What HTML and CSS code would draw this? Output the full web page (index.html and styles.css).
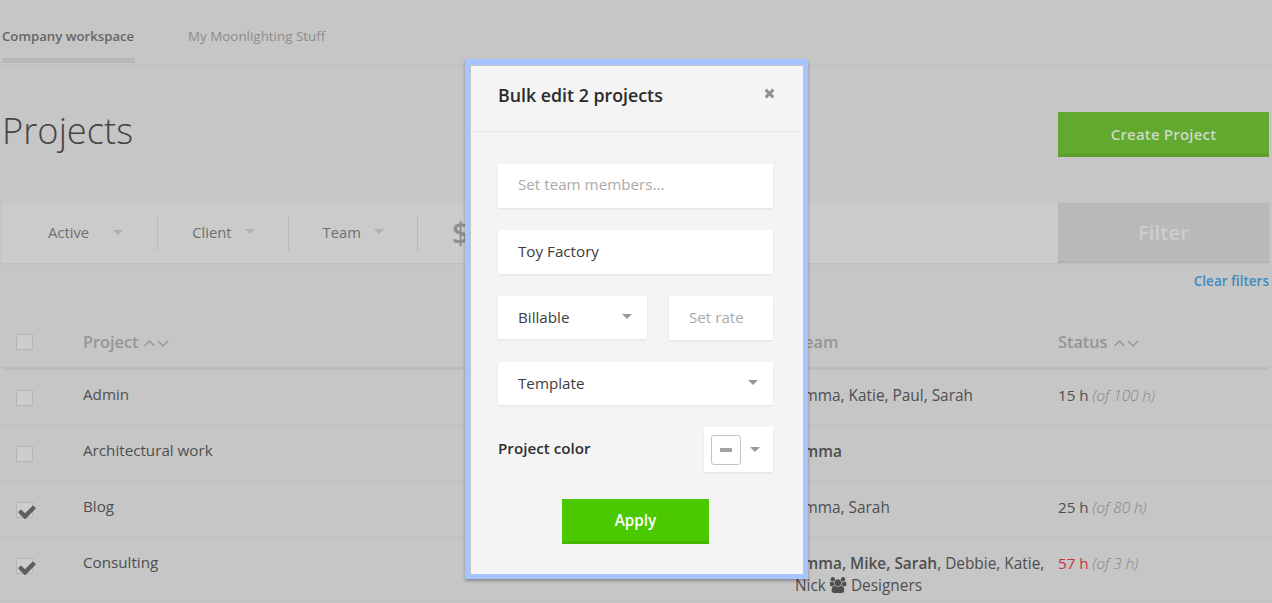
FILE: index.html
```html
<!DOCTYPE html>
<html lang="en">
<head>
<meta charset="utf-8">
<title>Projects</title>
<link rel="stylesheet" href="styles.css">
</head>
<body>
<div class="page">
  <nav class="tabs">
    <a class="tab tab-active">Company workspace</a>
    <a class="tab">My Moonlighting Stuff</a>
  </nav>
  <header class="title-row">
    <h1 class="title">Projects</h1>
    <button class="create">Create Project</button>
  </header>
  <section class="filters">
    <div class="filter filter-first"><span>Active</span><i class="caret caret-filter"></i></div>
    <div class="filter"><span>Client</span><i class="caret caret-filter"></i></div>
    <div class="filter"><span>Team</span><i class="caret caret-filter"></i></div>
    <div class="filter filter-money"><span>$</span></div>
    <button class="filter-btn">Filter</button>
  </section>
  <div class="clear-row"><a class="clear">Clear filters</a></div>
  <div class="table">
    <div class="row row-head">
      <div><span class="check"></span></div>
      <div class="sort">Project <svg class="chev" viewBox="0 0 25 8"><path d="M.5 7l5-5 5 5M14 2l5 5 5-5" fill="none" stroke="currentColor" stroke-width="1.4"/></svg></div>
      <div>Team</div>
      <div class="sort">Status <svg class="chev" viewBox="0 0 25 8"><path d="M.5 7l5-5 5 5M14 2l5 5 5-5" fill="none" stroke="currentColor" stroke-width="1.4"/></svg></div>
    </div>
    <div class="row">
      <div><span class="check"></span></div>
      <div>Admin</div>
      <div class="team">Emma, Katie, Paul, Sarah</div>
      <div class="status">15 h <em>(of 100 h)</em></div>
    </div>
    <div class="row">
      <div><span class="check"></span></div>
      <div>Architectural work</div>
      <div class="team"><b>Emma</b></div>
      <div class="status"></div>
    </div>
    <div class="row">
      <div><span class="check"><svg class="tick" viewBox="0 0 1792 1792"><path d="M1671 566q0 40-28 68l-724 724-136 136q-28 28-68 28t-68-28l-136-136-362-362q-28-28-28-68t28-68l136-136q28-28 68-28t68 28l294 295 656-657q28-28 68-28t68 28l136 136q28 28 28 68z"/></svg></span></div>
      <div>Blog</div>
      <div class="team">Emma, Sarah</div>
      <div class="status">25 h <em>(of 80 h)</em></div>
    </div>
    <div class="row row-tall">
      <div><span class="check"><svg class="tick" viewBox="0 0 1792 1792"><path d="M1671 566q0 40-28 68l-724 724-136 136q-28 28-68 28t-68-28l-136-136-362-362q-28-28-28-68t28-68l136-136q28-28 68-28t68 28l294 295 656-657q28-28 68-28t68 28l136 136q28 28 28 68z"/></svg></span></div>
      <div>Consulting</div>
      <div class="team"><b>Emma, Mike, Sarah</b>, Debbie, Katie, Nick <svg class="users" viewBox="0 0 1920 1792"><path d="M529 896q-162 5-265 128h-134q-82 0-138-40.500t-56-118.500q0-353 124-353 6 0 43.500 21t97.500 42.500 119 21.500q67 0 133-23-5 37-5 66 0 139 81 256zm1071 637q0 120-73 189.500t-194 69.500h-874q-121 0-194-69.500t-73-189.500q0-53 3.500-103.500t14-109 26.500-108.500 43-97.500 62-81 85.500-53.500 111.500-20q10 0 43 21.500t73 48 107 48 135 21.500 135-21.500 107-48 73-48 43-21.500q61 0 111.500 20t85.500 53.500 62 81 43 97.500 26.500 108.500 14 109 3.500 103.500zm-1024-1277q0 106-75 181t-181 75-181-75-75-181 75-181 181-75 181 75 75 181zm704 384q0 159-112.500 271.500t-271.500 112.500-271.500-112.500-112.500-271.500 112.500-271.500 271.500-112.500 271.500 112.500 112.500 271.500zm576 225q0 78-56 118.500t-138 40.500h-134q-103-123-265-128 81-117 81-256 0-29-5-66 66 23 133 23 59 0 119-21.500t97.500-42.500 43.500-21q124 0 124 353zm-128-609q0 106-75 181t-181 75-181-75-75-181 75-181 181-75 181 75 75 181z"/></svg> Designers</div>
      <div class="status"><span class="over">57 h</span> <em>(of 3 h)</em></div>
    </div>
  </div>
</div>

<div class="modal">
  <div class="modal-head">
    <h2 class="modal-title">Bulk edit 2 projects</h2>
    <svg class="close" viewBox="0 0 1408 1792"><path d="M1298 1322q0 40-28 68l-136 136q-28 28-68 28t-68-28l-294-294-294 294q-28 28-68 28t-68-28l-136-136q-28-28-28-68t28-68l294-294-294-294q-28-28-28-68t28-68l136-136q28-28 68-28t68 28l294 294 294-294q28-28 68-28t68 28l136 136q28 28 28 68t-28 68l-294 294 294 294q28 28 28 68z"/></svg>
  </div>
  <div class="modal-body">
    <div class="field field-placeholder">Set team members...</div>
    <div class="field">Toy Factory</div>
    <div class="field-pair">
      <div class="field field-select field-billable">Billable<i class="caret"></i></div>
      <div class="field field-placeholder field-rate">Set rate</div>
    </div>
    <div class="field field-select field-template">Template<i class="caret"></i></div>
    <div class="color-row">
      <span class="color-label">Project color</span>
      <div class="color-picker"><span class="swatch"><i class="dash"></i></span><i class="caret"></i></div>
    </div>
    <button class="apply">Apply</button>
  </div>
</div>
</body>
</html>
```

FILE: styles.css
```css
* { box-sizing: border-box; }
html, body { margin: 0; height: 603px; overflow: hidden; }
body {
  background: #c6c6c6;
  font-family: "Open Sans", "Liberation Sans", sans-serif;
  font-size: 15.2px;
  color: #4f4f4f;
  position: relative;
}
button { font-family: inherit; border: 0; padding: 0; }
h1, h2 { margin: 0; }

.tabs {
  height: 66px;
  border-bottom: 1px solid #bebebe;
  display: flex;
  padding-left: 2px;
  gap: 53px;
}
.tab {
  height: 63px;
  padding-top: 27px;
  font-size: 13.4px;
  line-height: 18px;
  color: #8c8c8c;
}
.tab-active {
  width: 133px;
  font-size: 13.2px;
  white-space: nowrap;
  color: #666;
  font-weight: 600;
  border-bottom: 5px solid #b8b8b8;
}

.title-row {
  height: 137px;
  padding: 46px 3px 0 2px;
  display: flex;
  justify-content: space-between;
  align-items: flex-start;
}
.title {
  font-size: 36.3px;
  line-height: 40px;
  font-weight: 300;
  margin-top: -2px;
  color: #444;
}
.create {
  width: 211px;
  height: 45px;
  padding-top: 2px;
  background: #62a92f;
  border-bottom: 3px solid #5c9f2c;
  color: #cfd8c8;
  font-size: 15px;
  font-weight: 600;
  letter-spacing: .2px;
}

.filters {
  height: 60px;
  margin: 0 3px 0 2px;
  background: #cbcbcb;
  box-shadow: 0 1px 1px #bfbfbf;
  display: flex;
  align-items: center;
}
.filter {
  height: 35px;
  border-right: 1px solid #bababa;
  padding: 0 33px 2px 34px;
  display: flex;
  align-items: center;
  color: #6f6f6f;
  font-size: 14.8px;
}
.filter-first { padding-left: 46px; padding-right: 34px; }
.filter-first .caret { margin-left: 24px; margin-top: 1px; }
.filter-money {
  border-right: 0;
  flex: 1;
  font-size: 30px;
  font-weight: 600;
  color: #8e8e8e;
}
.filter-btn {
  width: 211px;
  height: 60px;
  background: #b9b9b9;
  border-bottom: 2px solid #b2b2b2;
  color: #cdcdcd;
  font-size: 20.5px;
  font-weight: 600;
}

.caret {
  display: block;
  width: 0;
  height: 0;
  border-left: 5px solid transparent;
  border-right: 5px solid transparent;
  border-top: 5px solid #999;
}
.caret-filter { margin-left: 13px; margin-top: -2px; border-top-color: #b0b0b0; }

.clear-row {
  height: 36px;
  padding: 10px 3px 0 0;
  text-align: right;
  font-size: 13.5px;
  line-height: 17px;
  font-weight: 600;
}
.clear { color: #3f8bc0; }

.table { margin: 0 3px 0 2px; }
.row {
  display: grid;
  grid-template-columns: 81px 712px 263px 1fr;
  height: 56px;
  border-bottom: 1px solid #bcbcbc;
  padding-top: 13px;
  line-height: 22px;
}
.team { padding: 2px 10px 0 0; font-size: 15.4px; }
.status { padding-top: 1px; }
.row-head {
  height: 71px;
  padding-top: 32px;
  border-bottom: 3px solid #bcbcbc;
  font-size: 16.3px;
  font-weight: 600;
  color: #959595;
}
.row-tall { height: 64px; }
.row-head .check { margin-top: 3px; }
.sort { display: flex; align-items: flex-start; gap: 6px; }
.chev { width: 25px; height: 8px; margin-top: 8px; }

.check {
  display: block;
  width: 17px;
  height: 16px;
  margin: 7px 0 0 14px;
  border: 1px solid #b5b5b5;
  background: #cdcdcd;
  position: relative;
}
.tick {
  position: absolute;
  left: 0;
  top: -1px;
  width: 20px;
  height: 20px;
  fill: #5e5e5e;
}
.users { width: 17px; height: 16px; fill: #4f4f4f; vertical-align: -2px; }
b { font-weight: 600; }
em { color: #848484; font-weight: 300; }
.over { color: #c2333a; }

.modal {
  position: absolute;
  left: 465px;
  top: 59px;
  width: 343px;
  height: 520px;
  border: 5px solid #a6c4ff;
  border-top-width: 6px;
  background: #f4f4f4;
  box-shadow: 0 2px 3px rgba(0,0,0,.3), inset 1px 1px 0 #c4c4c4;
  color: #3c3c3c;
}
.modal-head {
  height: 67px;
  border-bottom: 1px solid #e9e9e9;
  position: relative;
  padding: 18px 28px 0;
}
.modal-title {
  font-size: 17.8px;
  line-height: 24px;
  font-weight: 600;
  color: #2b2b2b;
}
.close {
  position: absolute;
  right: 28px;
  top: 21px;
  width: 11px;
  height: 14px;
  fill: #909090;
}
.modal-body {
  padding: 32px 30px 0 28px;
  display: flex;
  flex-direction: column;
  gap: 22px;
  align-items: stretch;
}
.field {
  height: 44px;
  background: #fff;
  box-shadow: 0 1px 2px rgba(0,0,0,.08);
  padding: 0 15px 3px 20px;
  display: flex;
  align-items: center;
  justify-content: space-between;
  font-size: 15.2px;
}
.field-placeholder { color: #aaa; padding-bottom: 4px; }
.field-pair { display: flex; justify-content: space-between; align-items: flex-start; }
.field-billable { width: 149px; height: 43px; padding-bottom: 1px; }
.field-rate { width: 104px; padding-bottom: 3px; }
.field-template { height: 43px; padding-bottom: 1px; }
.field-select .caret { margin-top: -1px; }
.color-row { display: flex; justify-content: space-between; align-items: center; height: 45px; }
.color-label { font-weight: 600; font-size: 15.2px; color: #2f2f2f; margin-top: -4px; }
.color-picker {
  width: 69px;
  height: 45px;
  background: #fff;
  box-shadow: 0 1px 2px rgba(0,0,0,.08);
  padding: 0 13px 0 7px;
  display: flex;
  align-items: center;
  justify-content: space-between;
}
.swatch {
  width: 30px;
  height: 30px;
  border: 1px solid #c4c4c4;
  border-radius: 3px;
  display: flex;
  align-items: center;
  justify-content: center;
}
.dash { display: block; width: 12px; height: 4px; background: #a3a3a3; }
.apply {
  align-self: center;
  width: 147px;
  height: 45px;
  margin-top: 5px;
  background: #4bc900;
  border-bottom: 3px solid #44b800;
  color: #fff;
  font-size: 15.3px;
  font-weight: 600;
}
```
